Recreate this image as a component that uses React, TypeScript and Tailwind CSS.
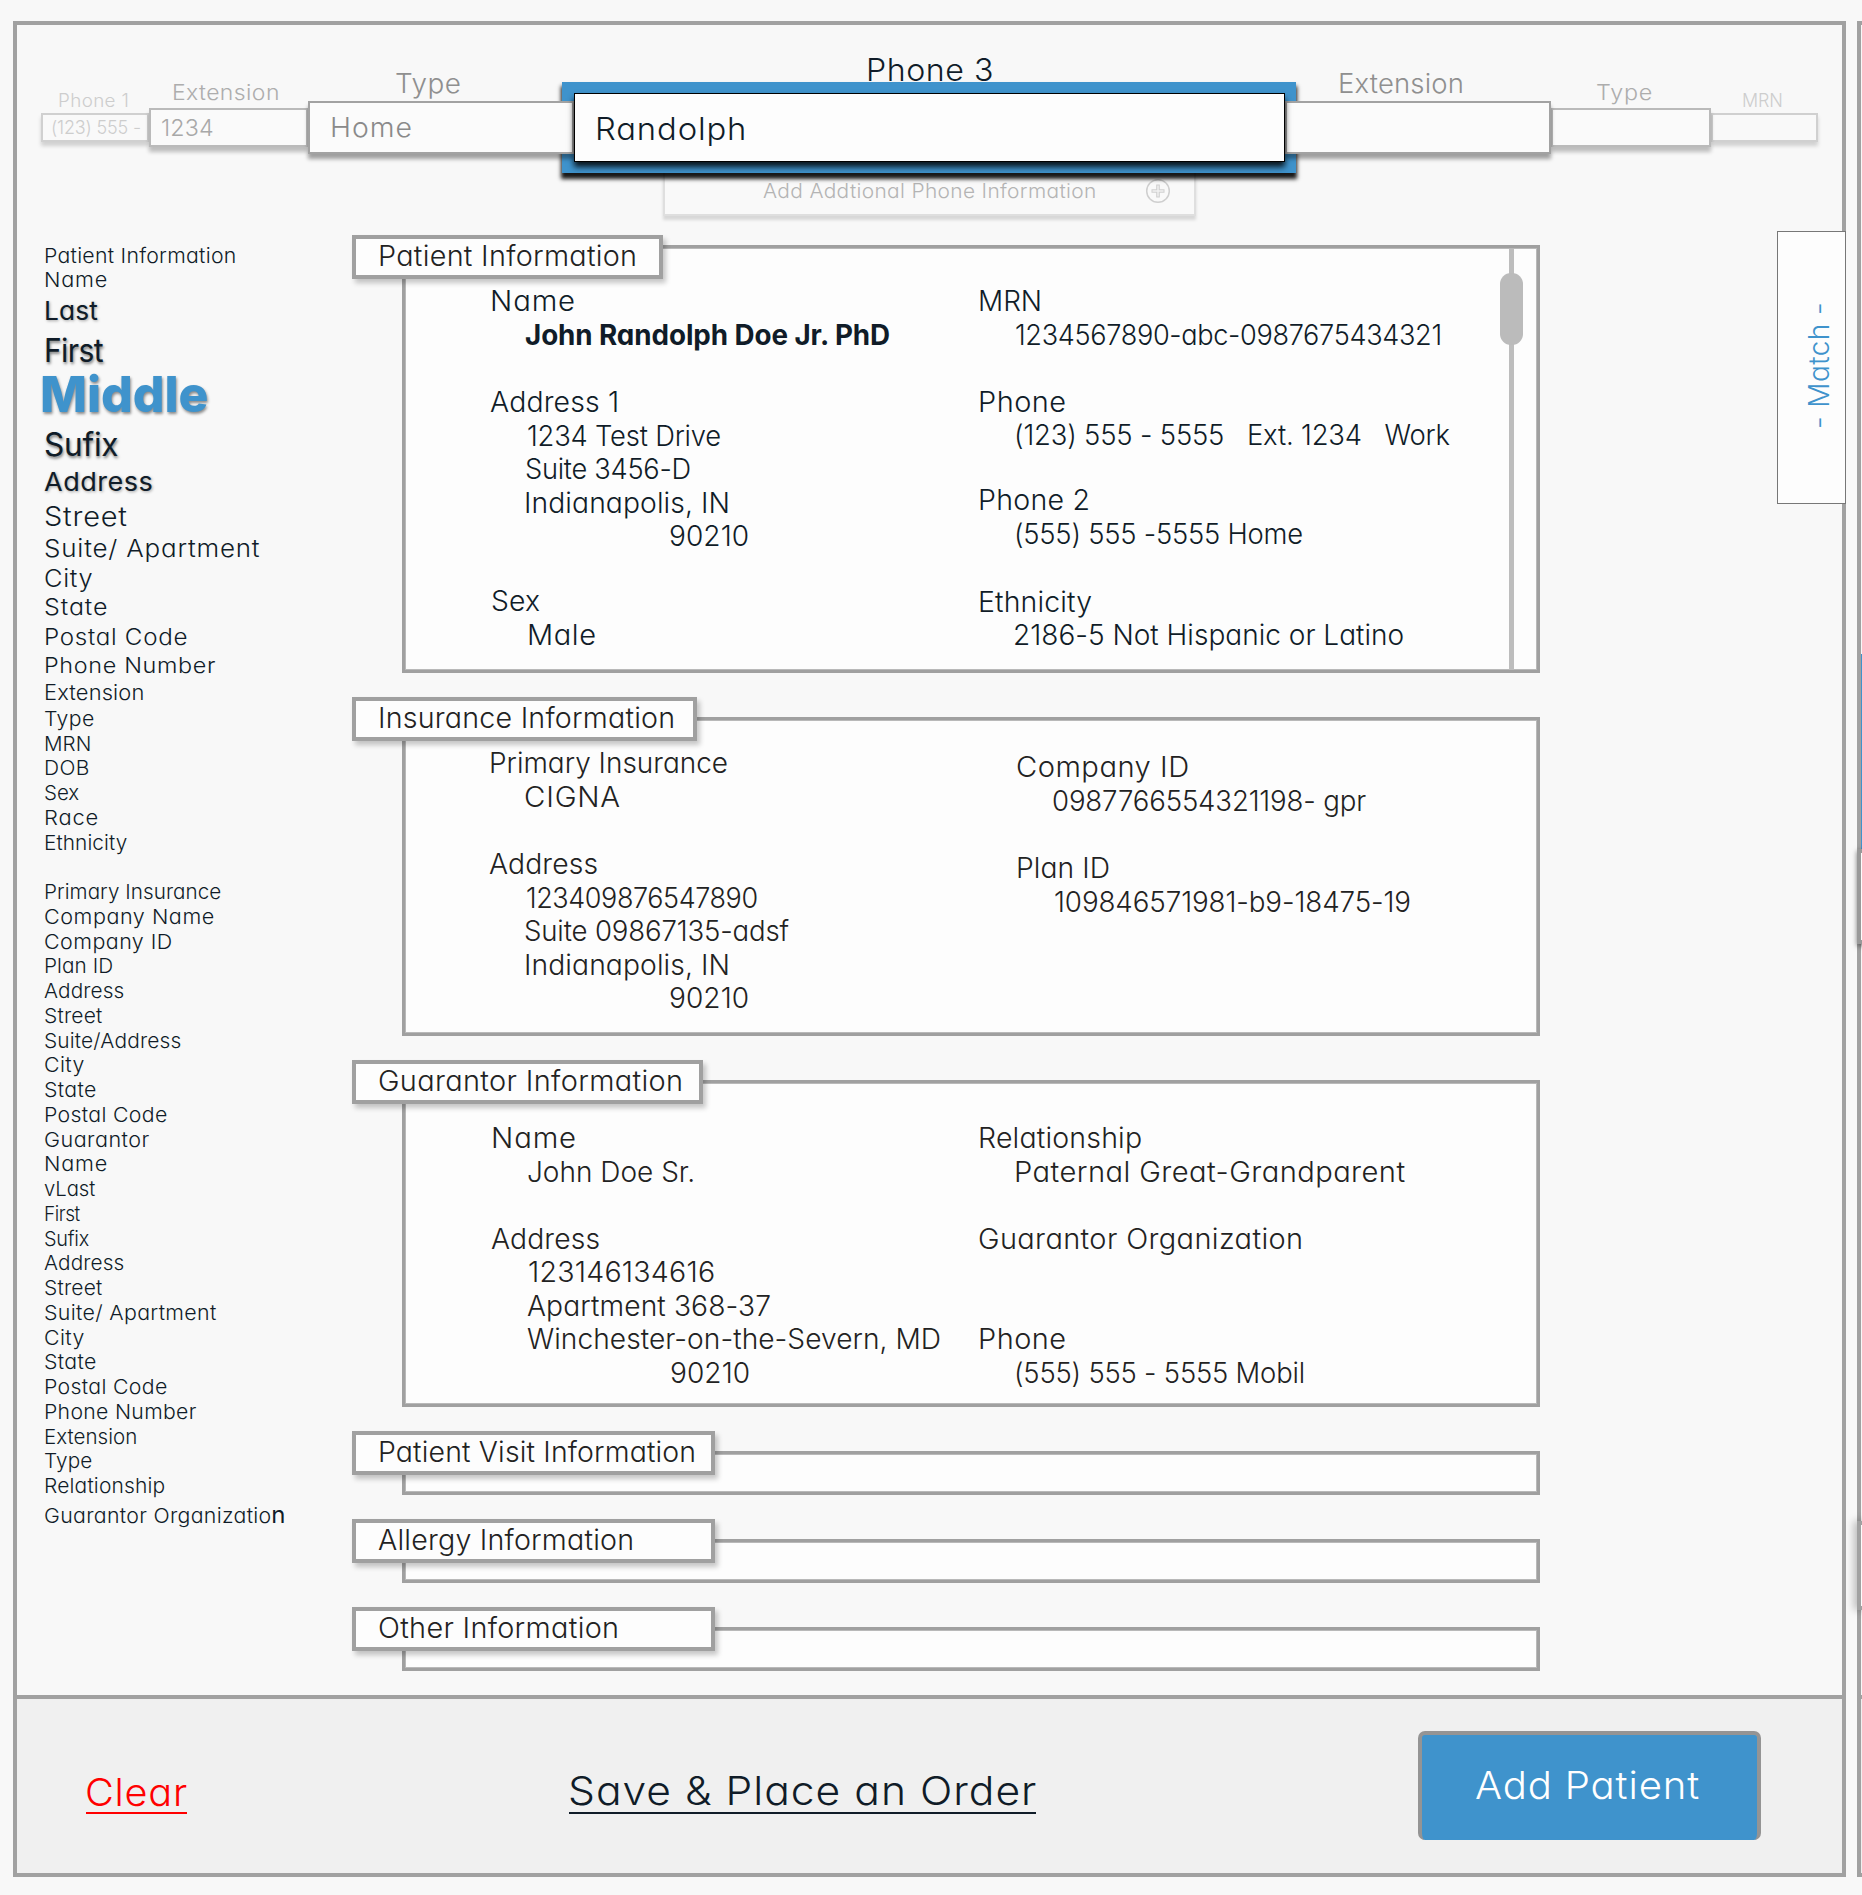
import React, { useLayoutEffect, useRef } from "react";

/* Text set to an exact optical width, shared between tracking and glyph width. */
function Fit({ w, children, className = "" }: { w: number; children: string; className?: string }) {
  const ref = useRef<HTMLSpanElement>(null);
  useLayoutEffect(() => {
    const el = ref.current;
    if (!el) return;
    el.style.letterSpacing = "0px";
    el.style.transform = "none";
    el.style.marginRight = "0px";
    const size = parseFloat(getComputedStyle(el).fontSize);
    const target = w + size * 0.11;
    const natural = el.getBoundingClientRect().width;
    const tracking = (0.4 * (target - natural)) / Math.max(1, children.length - 1);
    el.style.letterSpacing = `${tracking.toFixed(3)}px`;
    const tracked = el.getBoundingClientRect().width;
    const scale = target / (tracked - tracking);
    el.style.transform = `scaleX(${scale.toFixed(4)})`;
    el.style.marginRight = `${(target - tracked).toFixed(2)}px`;
  }, [w, children]);
  return (
    <span ref={ref} className={`inline-block shrink-0 origin-left whitespace-pre ${className}`}>
      {children}
    </span>
  );
}

type NavItem = [text: string, width: number, className: string];

const STEP = "h-[24.76px] text-[20.5px]";

const NAV: NavItem[] = [
  ["Patient Information", 190, "h-[25.7px] text-[20.5px]"],
  ["Name", 61, "h-[24.1px] text-[20.5px]"],
  ["Last", 51, "h-[33.3px] text-[26px] font-normal [text-shadow:1px_1px_3px_rgba(0,0,0,0.35)]"],
  ["First", 56, "h-[42.8px] text-[32px] font-normal [text-shadow:1px_2px_3px_rgba(0,0,0,0.5)]"],
  ["Middle", 163, "h-[52.7px] text-[50px] font-extrabold text-[#3f93cc] -ml-[4px] [text-shadow:1px_2px_3px_rgba(0,0,0,0.45)]"],
  ["Sufix", 71, "h-[41.2px] text-[32px] font-normal [text-shadow:1px_2px_3px_rgba(0,0,0,0.5)]"],
  ["Address", 106, "h-[34.3px] text-[26px] font-normal [text-shadow:1px_1px_3px_rgba(0,0,0,0.35)]"],
  ["Street", 80, "h-[35.3px] text-[27px]"],
  ["Suite/ Apartment", 213, "h-[30.6px] text-[24px]"],
  ["City", 46, "h-[30.3px] text-[24px]"],
  ["State", 61, "h-[28.2px] text-[23px]"],
  ["Postal Code", 141, "h-[29.5px] text-[22.5px]"],
  ["Phone Number", 169, "h-[27.7px] text-[22px]"],
  ["Extension", 98, "h-[27.2px] text-[21.5px]"],
  ["Type", 48, "h-[26.4px] text-[20.5px]"],
  ["MRN", 45, "h-[24.1px] text-[20.5px]"],
  ["DOB", 43, "h-[24.4px] text-[20.5px]"],
  ["Sex", 33, "h-[25px] text-[20.5px]"],
  ["Race", 52, "h-[25px] text-[20.5px]"],
  ["Ethnicity", 81, "h-[25.2px] text-[20.5px]"],
  ["Primary Insurance", 175, "h-[48.9px] text-[20.5px]"],
  ["Company Name", 168, STEP],
  ["Company ID", 126, STEP],
  ["Plan ID", 67, STEP],
  ["Address", 78, STEP],
  ["Street", 56, STEP],
  ["Suite/Address", 135, STEP],
  ["City", 38, STEP],
  ["State", 50, STEP],
  ["Postal Code", 121, STEP],
  ["Guarantor", 103, STEP],
  ["Name", 61, STEP],
  ["vLast", 49, STEP],
  ["First", 34, STEP],
  ["Sufix", 43, STEP],
  ["Address", 78, STEP],
  ["Street", 56, STEP],
  ["Suite/ Apartment", 170, STEP],
  ["City", 38, STEP],
  ["State", 50, STEP],
  ["Postal Code", 121, STEP],
  ["Phone Number", 150, STEP],
  ["Extension", 91, STEP],
  ["Type", 46, STEP],
  ["Relationship", 119, STEP],
];

function Sidebar() {
  return (
    <nav className="flex w-[385px] shrink-0 flex-col pt-[24.8px] pl-[27px] leading-none text-[#101c28]">
      {NAV.map(([text, width, cls], i) => (
        <div key={i} className={`flex items-end leading-none ${cls}`}>
          <Fit w={width}>{text}</Fit>
        </div>
      ))}
      <div className="flex h-[28px] items-baseline pt-[8px] text-[20.5px] leading-none">
        <Fit w={225}>Guarantor Organizatio</Fit>
        <span className="text-[24px] leading-[20px] font-normal">n</span>
      </div>
    </nav>
  );
}

function Slot({
  label,
  column,
  labelBox,
  box,
  children,
}: {
  label: React.ReactNode;
  column: string;
  labelBox: string;
  box: string;
  children?: React.ReactNode;
}) {
  return (
    <div className={`flex shrink-0 flex-col ${column}`}>
      <div className={`flex items-end leading-none ${labelBox}`}>{label}</div>
      <div className={`relative flex items-center border-solid leading-none ${box}`}>{children}</div>
    </div>
  );
}

const FAR = "h-[29px] border-2 border-[#d0d0d0] bg-[#f9f9f9] shadow-[0_4px_4px_rgba(0,0,0,0.16)]";
const MID = "z-[1] h-[39px] border-2 border-[#bababa] bg-[#fafafa] shadow-[0_5px_4px_rgba(0,0,0,0.24)]";
const NEAR = "z-[2] h-[53px] border-2 border-[#a2a2a2] bg-[#fbfbfb] shadow-[0_5px_4px_rgba(0,0,0,0.36)]";

function Carousel() {
  return (
    <div className="relative z-10 flex h-[133px] pl-[24px]">
      <Slot
        column="w-[108px]"
        labelBox="h-[73px] pl-[17px] pb-[3px] text-[18px] text-[#cdcdcd]"
        label={<Fit w={69}>Phone 1</Fit>}
        box={FAR}
      >
        <span className="flex pl-[8px] text-[18.5px] text-[#cdcdcd]">
          <Fit w={88}>{"(123) 555 -"}</Fit>
        </span>
      </Slot>
      <Slot
        column="w-[159px]"
        labelBox="h-[68px] pl-[23px] pb-[5px] text-[22px] text-[#adadad]"
        label={<Fit w={105}>Extension</Fit>}
        box={MID}
      >
        <span className="flex pt-[1px] pl-[10px] text-[23px] text-[#a8a8a8]">
          <Fit w={50}>1234</Fit>
        </span>
      </Slot>
      <Slot
        column="w-[266px]"
        labelBox="h-[61px] pl-[87px] pb-[4px] text-[27px] text-[#8f8f8f]"
        label={<Fit w={63}>Type</Fit>}
        box={NEAR}
      >
        <span className="flex pl-[20px] text-[27px] text-[#8a8a8a]">
          <Fit w={79}>Home</Fit>
        </span>
      </Slot>
      <div className="flex w-[711px] shrink-0 flex-col">
        <div className="flex h-[53px] items-end pb-[8px] pl-[292px] text-[31px] leading-none text-[#101c28]">
          <Fit w={124}>Phone 3</Fit>
        </div>
        <div className="relative h-[69px]">
          <div className="absolute -top-[11px] -right-[11px] -bottom-[11px] -left-[12px] bg-[#3f93cc] shadow-[0_5px_4px_1px_rgba(0,0,0,0.9)]" />
          <div className="relative z-[3] flex h-[69px] w-[710.5px] items-center border-[1.5px] border-black bg-[#fdfdfd] pt-[2px] pl-[20px] text-[31px] leading-none text-[#101c28] shadow-[0_5px_6px_0px_rgba(0,0,0,0.85)]">
            <Fit w={148}>Randolph</Fit>
          </div>
        </div>
      </div>
      <Slot
        column="w-[266px]"
        labelBox="h-[61px] pl-[53px] pb-[4px] text-[27px] text-[#8f8f8f]"
        label={<Fit w={123}>Extension</Fit>}
        box={NEAR}
      />
      <Slot
        column="w-[160px]"
        labelBox="h-[68px] pl-[45px] pb-[5px] text-[22px] text-[#adadad]"
        label={<Fit w={54}>Type</Fit>}
        box={MID}
      />
      <Slot
        column="w-[107px]"
        labelBox="h-[73px] pl-[31px] pb-[3px] text-[18px] text-[#cdcdcd]"
        label={<Fit w={39}>MRN</Fit>}
        box={FAR}
      />
    </div>
  );
}

function AddPhoneBar() {
  return (
    <div className="ml-[646px] flex h-[43px] w-[533px] items-center border-2 border-t-0 border-[#dfdfdf] bg-[#f9f9f9] pb-[6px] pl-[98px] text-[20px] leading-none text-[#b4b4b4] shadow-[0_4px_3px_rgba(0,0,0,0.13)]">
      <Fit w={331}>Add Addtional Phone Information</Fit>
      <svg className="ml-[49px] h-[26px] w-[26px]" viewBox="0 0 26 26" fill="none" stroke="#cfcfcf">
        <circle cx="13" cy="13" r="11.3" strokeWidth="1.5" />
        <path d="M13 6.5v13M6.5 13h13" strokeWidth="3.6" />
        <path d="M13 7.5v11M7.5 13h11" stroke="#f1f1f1" strokeWidth="1.4" />
      </svg>
    </div>
  );
}

type Row = [text: string, width: number, indent: string];

function Group({ rows, className = "" }: { rows: Row[]; className?: string }) {
  return (
    <div className={className}>
      {rows.map(([text, width, indent], i) => (
        <div key={i} className={`h-[33.5px] leading-[33.5px] ${indent}`}>
          <Fit w={width}>{text}</Fit>
        </div>
      ))}
    </div>
  );
}

function Card({
  title,
  titleWidth,
  tab,
  body,
  children,
}: {
  title: string;
  titleWidth: number;
  tab: string;
  body: string;
  children?: React.ReactNode;
}) {
  return (
    <section
      className={`relative flex w-[1138px] shrink-0 border-[3px] border-[#a0a0a0] bg-[#fdfdfd] text-[28px] shadow-[inset_0_0_0_1px_#b9b9b9] ${body}`}
    >
      <h2
        className={`absolute -left-[53px] flex h-[44px] items-center border-4 border-[#a0a0a0] bg-[#fdfdfd] pb-[2px] pl-[22px] leading-none font-light text-[#222] shadow-[3px_4px_5px_rgba(0,0,0,0.22)] ${tab}`}
      >
        <Fit w={titleWidth}>{title}</Fit>
      </h2>
      {children}
    </section>
  );
}

function Cards() {
  return (
    <div className="flex shrink-0 flex-col gap-[44px] pt-[29px]">
      <Card title="Patient Information" titleWidth={256} tab="-top-[13px] w-[311px]" body="h-[428px] text-[#101c28]">
        <div className="w-[489px] shrink-0 pt-[37px] pl-[85px]">
          <Group
            rows={[
              ["Name", 82, ""],
              ["John Randolph Doe Jr. PhD", 362, "pl-[35px] font-bold"],
            ]}
          />
          <Group
            className="mt-[34px]"
            rows={[
              ["Address 1", 126, ""],
              ["1234 Test Drive", 191, "pl-[37px]"],
              ["Suite 3456-D", 163, "pl-[35px]"],
              ["Indianapolis, IN", 203, "pl-[34px]"],
              ["90210", 77, "pl-[179px]"],
            ]}
          />
          <Group
            className="mt-[31.5px]"
            rows={[
              ["Sex", 46, "pl-[1px]"],
              ["Male", 66, "pl-[37px]"],
            ]}
          />
        </div>
        <div className="pt-[37px] pl-[84px]">
          <Group
            rows={[
              ["MRN", 61, ""],
              ["1234567890-abc-0987675434321", 424, "pl-[37px]"],
            ]}
          />
          <Group
            className="mt-[33.5px]"
            rows={[
              ["Phone", 85, ""],
              ["(123) 555 - 5555   Ext. 1234   Work", 433, "pl-[36px]"],
            ]}
          />
          <Group
            className="mt-[31.5px]"
            rows={[
              ["Phone 2", 109, ""],
              ["(555) 555 -5555 Home", 286, "pl-[36px]"],
            ]}
          />
          <Group
            className="mt-[34.5px]"
            rows={[
              ["Ethnicity", 111, ""],
              ["2186-5 Not Hispanic or Latino", 388, "pl-[35px]"],
            ]}
          />
        </div>
        <div className="absolute top-px right-[14px] bottom-0 flex w-[23px] justify-center">
          <div className="w-[5px] bg-[#bdbdbd]" />
          <div className="absolute top-[24px] h-[72px] w-[23px] rounded-[11px] bg-[#bbb]" />
        </div>
      </Card>

      <Card title="Insurance Information" titleWidth={294} tab="-top-[23px] w-[345px]" body="h-[319px] text-[#222]">
        <div className="w-[489px] shrink-0 pt-[27px] pl-[84px]">
          <Group
            rows={[
              ["Primary Insurance", 236, ""],
              ["CIGNA", 93, "pl-[35px]"],
            ]}
          />
          <Group
            className="mt-[34px]"
            rows={[
              ["Address", 106, ""],
              ["123409876547890", 229, "pl-[37px]"],
              ["Suite 09867135-adsf", 262, "pl-[35px]"],
              ["Indianapolis, IN", 203, "pl-[35px]"],
              ["90210", 77, "pl-[180px]"],
            ]}
          />
        </div>
        <div className="pt-[31px] pl-[122px]">
          <Group
            rows={[
              ["Company ID", 170, ""],
              ["0987766554321198- gpr", 311, "pl-[36px]"],
            ]}
          />
          <Group
            className="mt-[34px]"
            rows={[
              ["Plan ID", 91, ""],
              ["109846571981-b9-18475-19", 354, "pl-[38px]"],
            ]}
          />
        </div>
      </Card>

      <Card title="Guarantor Information" titleWidth={302} tab="-top-[23px] w-[351px]" body="h-[327px] text-[#222]">
        <div className="w-[489px] shrink-0 pt-[39px] pl-[86px]">
          <Group
            rows={[
              ["Name", 82, ""],
              ["John Doe Sr.", 165, "pl-[36px]"],
            ]}
          />
          <Group
            className="mt-[33.5px]"
            rows={[
              ["Address", 106, ""],
              ["123146134616", 184, "pl-[37px]"],
              ["Apartment 368-37", 241, "pl-[36px]"],
              ["Winchester-on-the-Severn, MD", 411, "pl-[36px]"],
              ["90210", 77, "pl-[179px]"],
            ]}
          />
        </div>
        <div className="pt-[39px] pl-[84px]">
          <Group
            rows={[
              ["Relationship", 161, ""],
              ["Paternal Great-Grandparent", 388, "pl-[36px]"],
            ]}
          />
          <Group className="mt-[33.5px]" rows={[["Guarantor Organization", 322, ""]]} />
          <Group
            className="mt-[67px]"
            rows={[
              ["Phone", 85, ""],
              ["(555) 555 - 5555 Mobil", 288, "pl-[36px]"],
            ]}
          />
        </div>
      </Card>

      <Card title="Patient Visit Information" titleWidth={315} tab="-top-[23px] w-[363px]" body="h-[44px]" />
      <Card title="Allergy Information" titleWidth={253} tab="-top-[23px] w-[363px]" body="h-[44px]" />
      <Card title="Other Information" titleWidth={238} tab="-top-[23px] w-[363px]" body="h-[44px]" />
    </div>
  );
}

export default function App() {
  return (
    <div className="flex h-[1895px] w-[1862px] overflow-hidden bg-[#f8f8f8] pt-[21px] pl-[13px] font-['Inter','Liberation_Sans',sans-serif] font-light [font-feature-settings:'cv11']">
      <main className="flex h-[1856px] w-[1833px] shrink-0 flex-col border-4 border-[#a1a1a1] bg-[#f8f8f8]">
        <div className="flex h-[1670px] flex-col pt-[15px]">
          <Carousel />
          <AddPhoneBar />
          <div className="flex">
            <Sidebar />
            <Cards />
            <button className="mt-[15px] -mr-[4px] ml-auto flex h-[273px] w-[69px] items-center justify-center border-[1.5px] border-[#777] bg-[#fdfdfd] pb-[3px] pl-[14px] text-[28px] leading-none text-[#3f93cc]">
              <span className="rotate-180 tracking-[0.4px] [writing-mode:vertical-rl]">- Match -</span>
            </button>
          </div>
        </div>
        <footer className="flex h-[178px] items-start border-t-4 border-[#a1a1a1] bg-[#f0f0f0] leading-none">
          <a className="mt-[74px] ml-[69px] w-[101px] border-b-2 border-[#ff0000] pb-px text-[38px] whitespace-nowrap text-[#ff0000]">
            <Fit w={98} className="-ml-[1px]">Clear</Fit>
          </a>
          <a className="mt-[72px] ml-[382px] w-[467px] border-b-2 border-[#101c28] pb-px text-[40px] whitespace-nowrap text-[#101c28]">
            <Fit w={464} className="-ml-[1px]">{"Save & Place an Order"}</Fit>
          </a>
          <button className="mt-[32px] ml-[382px] flex h-[109px] w-[343px] items-center rounded-[7px] border-4 border-b-0 border-[#949494] bg-[#3f93cc] pb-[6px] pl-[53px] text-[38px] leading-none text-white">
            <Fit w={220}>Add Patient</Fit>
          </button>
        </footer>
      </main>

      <aside className="ml-[11px] flex h-[1856px] w-[120px] shrink-0 flex-col border-4 border-[#a1a1a1]">
        <div className="mt-[629px] h-[195px] shrink-0 bg-[#3f93cc]" />
        <div className="-ml-[4px] h-[95px] shrink-0 border-4 border-[#999] bg-[#fdfdfd] shadow-[0_2px_5px_rgba(0,0,0,0.5)]" />
        <div className="mt-[577px] -ml-[4px] h-[89px] shrink-0 border-4 border-[#a1a1a1] bg-[#fdfdfd] shadow-[-3px_0px_8px_rgba(0,0,0,0.25)]" />
        <div className="mt-[85px] h-[178px] shrink-0 border-t-4 border-[#a1a1a1] bg-[#f0f0f0]" />
      </aside>
    </div>
  );
}
